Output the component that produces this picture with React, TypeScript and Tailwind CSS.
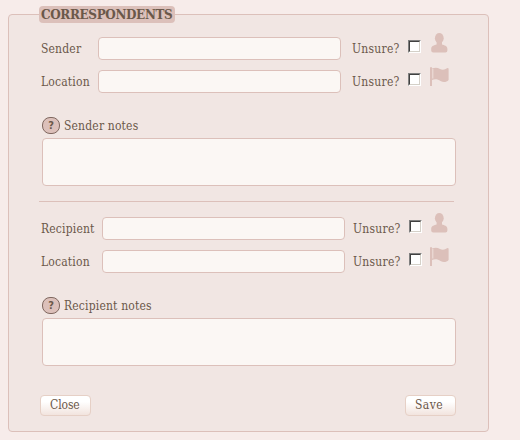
import React from "react";

function PersonIcon() {
  return (
    <svg width="17" height="20" viewBox="0 0 17 20" className="block fill-[#dcc0ba]">
      <ellipse cx="8.3" cy="5.2" rx="4.4" ry="5.1" />
      <path d="M5.6 8H11V11.6C13.2 12.4 16.4 12.8 16.4 16V17.6Q16.4 19.6 14.4 19.6H2.2Q0.2 19.6 0.2 17.6V16C0.2 12.8 3.4 12.4 5.6 11.6Z" />
    </svg>
  );
}

function FlagIcon() {
  return (
    <svg width="19" height="19" viewBox="0 0 19 19" className="block fill-[#dcc0ba]">
      <path d="M0 0.5Q1 -0.4 2 0.5V19H0Z" />
      <path d="M2 1.6C5 0.4 7.5 0.6 10 2C12.5 3.2 15 2.8 17 1.3Q18.6 0.6 18.6 2V13C16.5 15.2 13.5 15.8 10.5 14C8 12.3 5 11.8 2 13Z" />
      <path d="M2.8 2V11.5" className="stroke-[#efe0dc]" strokeWidth="1" />
    </svg>
  );
}

function Checkbox() {
  return (
    <div className="h-[13px] w-[13px] shrink-0 border border-t-[#808080] border-l-[#808080] border-r-white border-b-white">
      <div className="h-full w-full border border-t-[#404040] border-l-[#404040] border-r-[#d4d0c8] border-b-[#d4d0c8] bg-white" />
    </div>
  );
}

type FieldProps = { label: string; labelClass: string; gapClass: string; flag?: boolean };

function Field({ label, labelClass, gapClass, flag }: FieldProps) {
  return (
    <div className="flex h-[23px]">
      <label className={`shrink-0 whitespace-nowrap pt-[3px] leading-[19px] ${labelClass}`}>{label}</label>
      <input className="h-[23px] w-[243px] shrink-0 rounded-[4px] border border-[#dcc0ba] bg-[#fbf7f4] px-1 outline-none" />
      <span className={`shrink-0 whitespace-nowrap pt-[3px] leading-[19px] tracking-[0.25px] ${gapClass}`}>Unsure?</span>
      <div className="pt-[3px]"><Checkbox /></div>
      <div className={`ml-auto w-[19px] ${flag ? "-mt-[3px]" : "-mt-[4px] pl-px"}`}>
        {flag ? <FlagIcon /> : <PersonIcon />}
      </div>
    </div>
  );
}

function Notes({ label }: { label: string }) {
  return (
    <div className="ml-px">
      <div className="flex h-[21px]">
        <span className="flex h-[17px] w-[18px] items-center justify-center rounded-[8px] border border-[#806860] bg-[#dcc0ba] font-['DejaVu_Sans',sans-serif] text-[11px] leading-none font-bold tracking-normal">?</span>
        <span className="ml-[4px] leading-[19px]">{label}</span>
      </div>
      <textarea className="block h-[48px] w-[414px] resize-none rounded-[4px] border border-[#dcc0ba] bg-[#fbf7f4] outline-none" />
    </div>
  );
}

function Button({ children, className }: { children: string; className: string }) {
  return (
    <button className={`h-[21px] w-[51px] rounded-[4px] border border-[#e6d0c6] bg-linear-to-b from-white from-30% to-[#f2e4de] pb-px text-left leading-[18px] ${className}`}>
      {children}
    </button>
  );
}

export default function App() {
  return (
    <div className="flex h-[440px] w-[520px] overflow-hidden bg-[#f7ecea] pt-[14px] pl-2 font-['DejaVu_Serif_Condensed','DejaVu_Serif',serif] text-[12px] tracking-[0.17px] text-[#6b584a] [font-stretch:condensed]">
      <section className="h-[418px] w-[481px] rounded-[4px] border border-[#dcc0ba] bg-[#f1e6e3]">
        <h1 className="-mt-[9px] ml-[30px] h-[17px] w-[136px] rounded-[4px] bg-[#dcc0ba] pl-[2px] font-['DejaVu_Serif',serif] text-[12px] leading-[18px] font-bold tracking-[-0.35px] whitespace-nowrap [font-stretch:normal]">
          CORRESPONDENTS
        </h1>
        <div className="mt-[14px] ml-8 w-[415px]">
          <div className="flex w-[408px] flex-col gap-[10px]">
            <Field label="Sender" labelClass="w-[57px]" gapClass="ml-[11px] w-[56px]" />
            <Field label="Location" labelClass="w-[57px]" gapClass="ml-[11px] w-[56px]" flag />
          </div>
          <div className="pt-6"><Notes label="Sender notes" /></div>
          <hr className="mt-[15px] -ml-[2px] w-[415px] border-[#dcc0ba]" />
          <div className="mt-[15px] flex w-[408px] flex-col gap-[10px]">
            <Field label="Recipient" labelClass="w-[61px]" gapClass="ml-[8px] w-[56px]" />
            <Field label="Location" labelClass="w-[61px]" gapClass="ml-[8px] w-[56px]" flag />
          </div>
          <div className="pt-6"><Notes label="Recipient notes" /></div>
          <div className="mt-[29px] -ml-px flex w-[416px] justify-between">
            <Button className="pl-[9px] tracking-[-0.1px]">Close</Button>
            <Button className="pl-[9px] tracking-[0.4px]">Save</Button>
          </div>
        </div>
      </section>
    </div>
  );
}
